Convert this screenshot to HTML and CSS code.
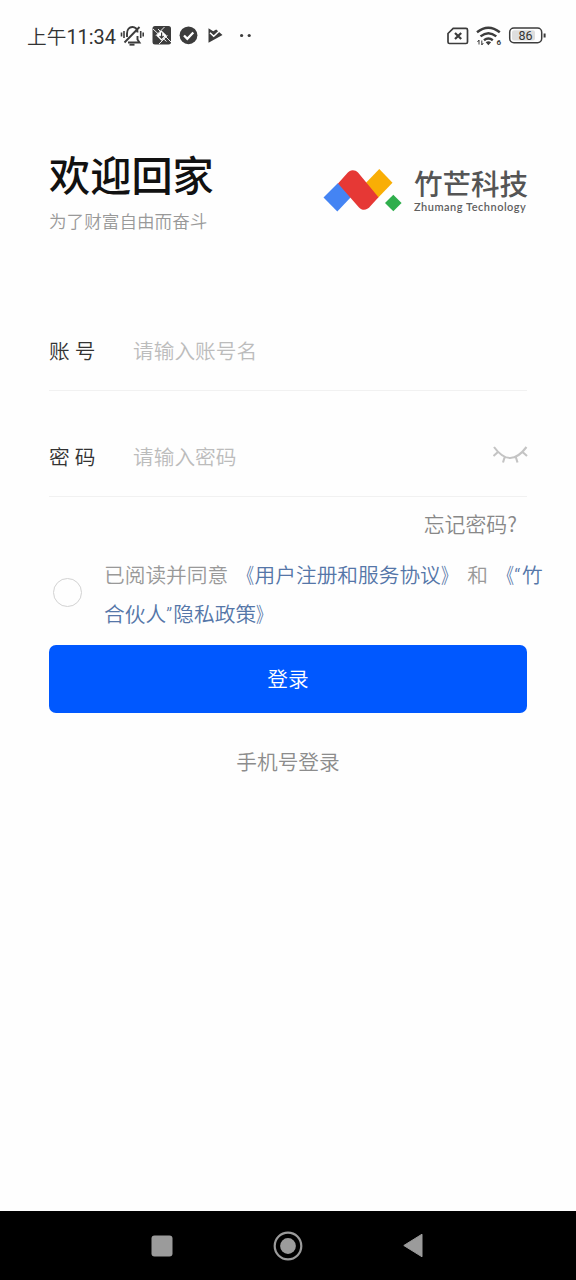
FILE: index.html
```html
<!DOCTYPE html>
<html lang="zh-CN">
<head>
<meta charset="utf-8">
<title>登录</title>
<link rel="stylesheet" href="styles.css">
</head>
<body>
<div class="screen">
  <header class="status">
    <span class="time">上午<span class="digits">11:34</span></span>
    <svg class="status-left" width="134" height="24" viewBox="120 24 134 24">
      <g fill="none" stroke="#3c3c3c" stroke-width="1.900">
        <path d="M127 37v-3.500c0-8.500 10.500-8.500 10.500-1M137.500 36v3.500l2 3H128M124.500 42.500l15-15.500"/>
        <path d="M121.500 32.500v4M124 31v7M140.700 31v7M143.200 32.500v4" stroke-width="1.600"/>
        <path d="M129.500 44.700h5"/>
      </g>
      <rect x="152.500" y="26" width="18.500" height="18.500" rx="2.500" fill="#3c3c3c"/>
      <path d="M161.500 30.500l5.300 5-5.300 5.300-5.300-5.300z" fill="#fff"/>
      <path d="M153 29l13.500 12.500M167.500 35.500l-8.500 8.500M156 35.500l8.500-8.500M171 42l-13-13" fill="none" stroke="#fff" stroke-width="0.900"/>
      <path d="M161.600 32.500v5.500M159.600 36l2 2.200 2-2.200" fill="none" stroke="#3c3c3c" stroke-width="1.200"/>
      <circle cx="188.500" cy="35.300" r="8.900" fill="#3c3c3c"/>
      <path d="M184 35.500l3.300 3.400 6-6.400" fill="none" stroke="#fff" stroke-width="2.300"/>
      <path d="M208.500 28.200l4.700 3 3-1.700 6.300 5.500-14 7.700z" fill="#3c3c3c"/>
      <path d="M210 32.700l3.700 3.500 7.500-7" fill="none" stroke="#fff" stroke-width="1.500"/>
      <circle cx="241.600" cy="35.500" r="1.600" fill="#3c3c3c"/>
      <circle cx="249.200" cy="35.500" r="1.600" fill="#3c3c3c"/>
    </svg>
    <svg class="status-right" width="102" height="24" viewBox="445 24 102 24">
      <path d="M453.200 28.400H466q1.500 0 1.500 1.500V42q0 1.500-1.500 1.500H449.500q-1.500 0-1.500-1.500V33.500z" fill="none" stroke="#3c3c3c" stroke-width="1.700"/>
      <path d="M455 33l6.200 6M461.200 33l-6.200 6" stroke="#3c3c3c" stroke-width="2.200"/>
      <g fill="none" stroke="#3c3c3c" stroke-width="2.400">
        <path d="M477 32.300q11.300-9.300 22.800 0"/>
        <path d="M480.500 36.400q7.900-6.500 15.800 0"/>
        <path d="M484 40.200q4.400-3.500 8.800 0"/>
      </g>
      <path d="M485.700 42.200q2.700-2 5.400 0l-2.700 3z" fill="#3c3c3c"/>
      <path d="M479 40v4.500M477.500 42l1.500-2M481.800 45v-4.500M483.300 43l-1.500 2" stroke="#3c3c3c"/>
      <text class="wifi-label" x="496.500" y="45">6</text>
      <rect x="509.700" y="28" width="32" height="14.800" rx="4.200" fill="none" stroke="#3c3c3c" stroke-width="1.500"/>
      <rect x="512" y="30.300" width="23" height="10.200" rx="2" fill="#dedede"/>
      <path d="M544.600 33.500v4" stroke="#3c3c3c" stroke-width="2"/>
      <text class="battery-label" x="525.500" y="40.200" text-anchor="middle">86</text>
    </svg>
  </header>

  <main class="content">
    <section class="hero">
      <div class="welcome">
        <h1>欢迎回家</h1>
        <p>为了财富自由而奋斗</p>
      </div>
      <div class="brand">
        <svg width="80" height="46" viewBox="323 168 80 46">
          <path d="M338 183l13.500 13.500L337.300 211.500 323.500 197.500z" fill="#4484f3"/>
          <path d="M379.300 169l13.200 13.700-14.200 14.800-13-14z" fill="#f9ae05"/>
          <path d="M338 183.500L346.500 174C349.500 169.500 354.500 169 358 172.500L378.500 197.300 370.500 206C367 210.500 362.500 211 359 207.500z" fill="#e63835"/>
          <path d="M393.300 194.700l8.300 8.300-8.300 8.300-8.300-8.300z" fill="#2fae4c"/>
        </svg>
        <div class="brand-text">
          <span class="brand-name">竹芒科技</span>
          <span class="brand-latin">Zhumang Technology</span>
        </div>
      </div>
    </section>

    <form class="login">
      <div class="field">
        <span class="label">账 号</span>
        <span class="placeholder">请输入账号名</span>
      </div>
      <div class="field">
        <span class="label">密 码</span>
        <span class="placeholder">请输入密码</span>
        <svg class="eye" width="36" height="20" viewBox="492 445 36 20">
          <path d="M494 448q16 22 32.500 0M498.500 452.500l-5 4.500M505 457l-2 6.500M515.500 457l2 6.500M522 452.500l5 4.500" fill="none" stroke="#c4c4c4" stroke-width="2.100"/>
        </svg>
      </div>
      <a class="forgot">忘记密码?</a>
      <div class="agreement">
        <span class="radio"></span>
        <p>已阅读并同意 <a><span class="open">《</span>用户注册和服务协议<span class="close">》</span></a> 和 <a><span class="open">《</span><span class="quote">“</span>竹<br>合伙人<span class="quote-end">”</span>隐私政策<span class="close">》</span></a></p>
      </div>
      <div class="submit">登录</div>
      <a class="phone-login">手机号登录</a>
    </form>
  </main>

  <nav class="navbar">
    <svg width="22" height="22"><rect x="0.500" y="0.500" width="21" height="21" rx="3" fill="#9b9b9b"/></svg>
    <svg width="30" height="30"><circle cx="15" cy="15" r="13.300" fill="none" stroke="#9b9b9b" stroke-width="2.200"/><circle cx="15" cy="15" r="7.900" fill="#9b9b9b"/></svg>
    <svg width="20" height="25"><path d="M19 1.200v22.600L0.800 12.500z" fill="#9b9b9b" stroke="#9b9b9b" stroke-linejoin="round"/></svg>
  </nav>
</div>
</body>
</html>
```
FILE: styles.css
```css
* { box-sizing: border-box; }

body {
  margin: 0;
  background: #fefefe;
  font-family: Roboto, "Noto Sans CJK SC", sans-serif;
  font-size: 20.7px;
  font-weight: 350;
  color: #333;
}

h1, p { margin: 0; }

.screen {
  display: flex;
  flex-direction: column;
  height: 1280px;
  overflow: hidden;
}

.status {
  display: flex;
  align-items: center;
  height: 72px;
  padding: 0 29px 0 27px;
}
.time {
  width: 93px;
  padding-top: 3px;
  font-size: 19.700px;
  line-height: 24px;
  white-space: nowrap;
}
.digits { font-size: 19.900px; font-weight: 400; }
.status-right { margin-left: auto; }
.wifi-label { font-size: 8px; font-weight: 700; fill: #3c3c3c; }
.battery-label { font-size: 12.500px; font-weight: 400; fill: #333; }

.content { flex: 1; padding: 72px 49px 0; }

.hero {
  display: flex;
  justify-content: space-between;
  height: 153px;
}
.welcome h1 {
  padding-top: 2px;
  font-size: 41.200px;
  font-weight: 500;
  line-height: 62px;
  color: #111;
}
.welcome p {
  font-size: 17.600px;
  line-height: 26px;
  margin-top: 1px;
  color: #999;
}
.brand {
  display: flex;
  gap: 11px;
  padding-top: 24px;
}
.brand-text {
  display: flex;
  flex-direction: column;
  width: 113px;
  padding-top: 2px;
  white-space: nowrap;
}
.brand-name {
  font-size: 28.500px;
  font-weight: 500;
  line-height: 32px;
  color: #555;
}
.brand-latin {
  margin-top: -2px;
  font-family: Lato, sans-serif;
  font-size: 11px;
  font-weight: 600;
  letter-spacing: 0.500px;
  line-height: 13px;
  color: #606060;
}

.field {
  display: flex;
  align-items: center;
  height: 94px;
  padding-top: 12px;
  border-bottom: 1px solid #f1f1f1;
}
.field + .field { height: 106px; padding-top: 24px; }
.label { width: 84px; }
.placeholder { color: #bcbcbc; }
.eye { margin: 0 -1px 3px auto; }

.forgot {
  display: block;
  padding-right: 10px;
  font-family: "Noto Sans CJK SC", sans-serif;
  font-size: 20.900px;
  line-height: 53px;
  height: 54px;
  text-align: right;
  color: #888;
}

.agreement {
  display: flex;
  gap: 22px;
  height: 94px;
  margin-right: -40px;
  padding: 6px 0 0 4px;
  color: #999;
}
.radio {
  width: 29px;
  height: 29px;
  margin-top: 21px;
  border: 1.500px solid #d2d2d2;
  border-radius: 50%;
}
.agreement p { line-height: 39px; white-space: nowrap; word-spacing: 0.700px; }
.agreement a { color: #5576a8; }
.open, .close { display: inline-block; }
.open { transform: scaleX(0.750); transform-origin: 85% 50%; }
.close { transform: scaleX(0.750); transform-origin: left; }
.quote { margin-right: 1.500px; }
.quote-end { margin-right: 1px; }

.submit {
  height: 68px;
  padding-top: 1px;
  border-radius: 7px;
  background: #0058ff;
  color: #fff;
  line-height: 68px;
  text-align: center;
}
.phone-login {
  display: block;
  margin-top: 35px;
  line-height: 30px;
  text-align: center;
  color: #8c8c8c;
}

.navbar {
  display: flex;
  align-items: center;
  justify-content: space-between;
  height: 69px;
  padding: 0 153px 0 151px;
  background: #000;
}
```
